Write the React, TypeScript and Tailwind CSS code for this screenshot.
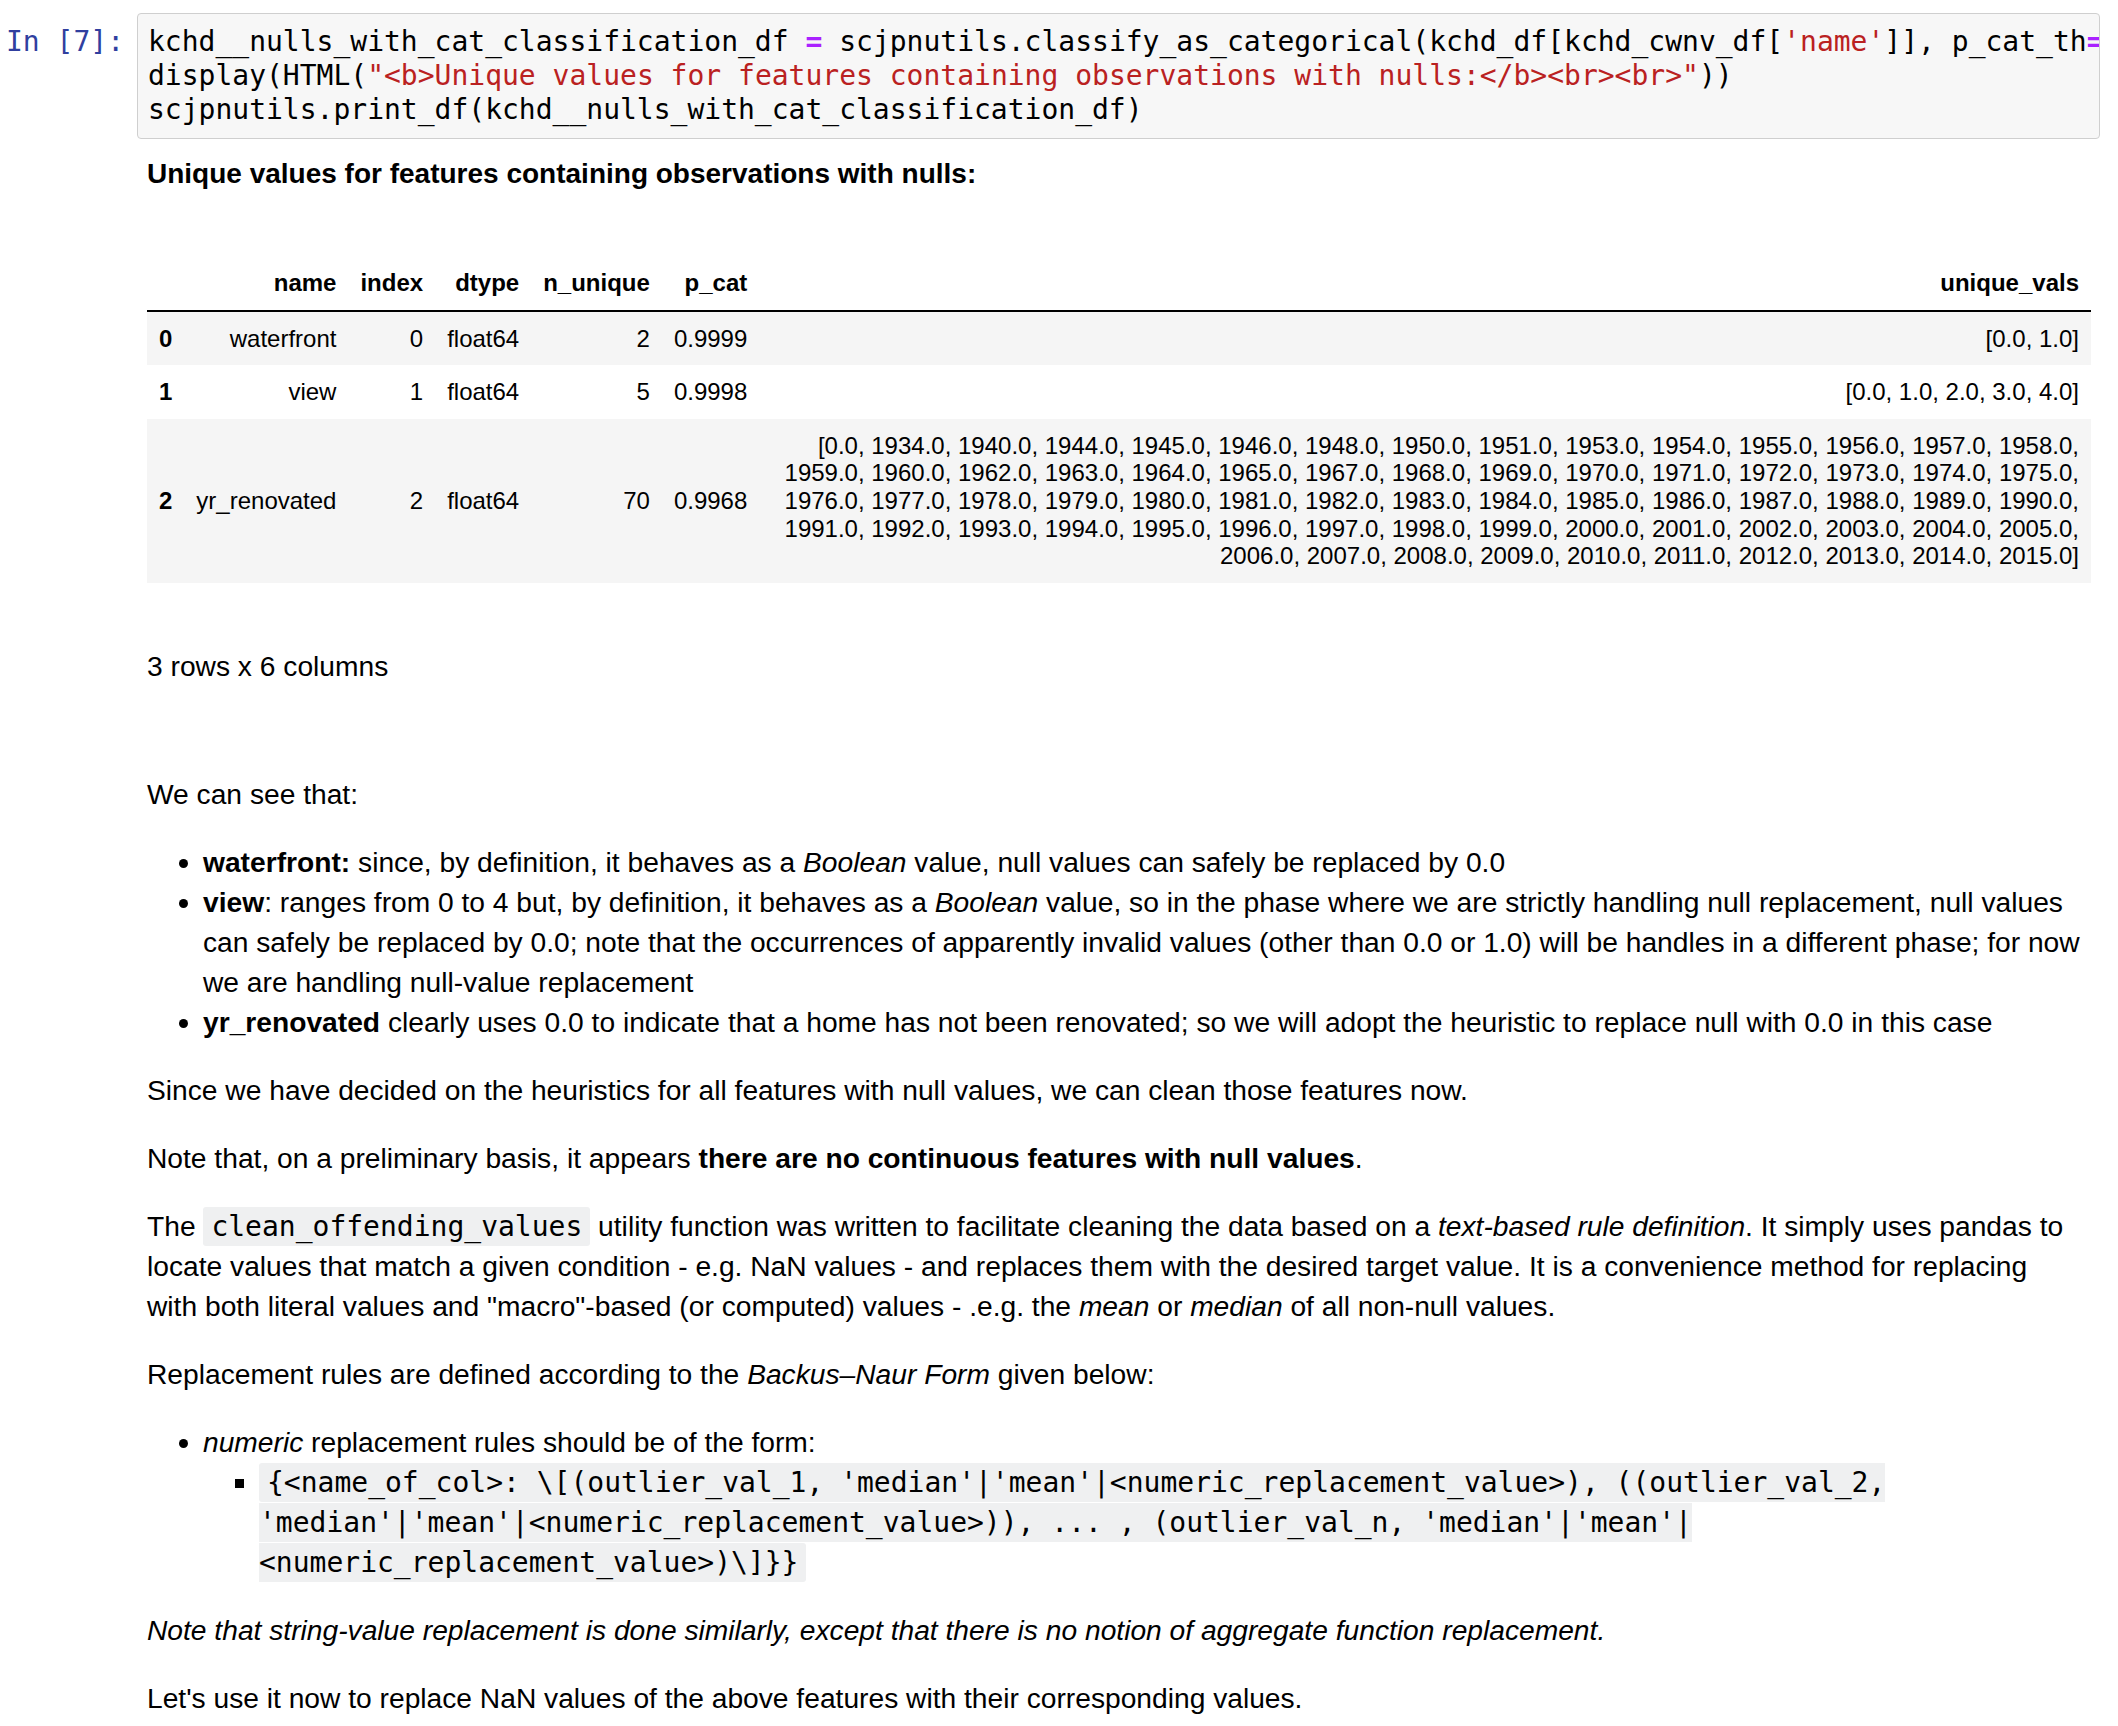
import React from 'react'

type Row = {
  label: number
  name: string
  index: number
  dtype: string
  nUnique: number
  pCat: string
  uniqueVals: string
}

const years =
  '[0.0, 1934.0, 1940.0, 1944.0, 1945.0, 1946.0, 1948.0, 1950.0, 1951.0, 1953.0, 1954.0, 1955.0, 1956.0, 1957.0, 1958.0, ' +
  '1959.0, 1960.0, 1962.0, 1963.0, 1964.0, 1965.0, 1967.0, 1968.0, 1969.0, 1970.0, 1971.0, 1972.0, 1973.0, 1974.0, 1975.0, ' +
  '1976.0, 1977.0, 1978.0, 1979.0, 1980.0, 1981.0, 1982.0, 1983.0, 1984.0, 1985.0, 1986.0, 1987.0, 1988.0, 1989.0, 1990.0, ' +
  '1991.0, 1992.0, 1993.0, 1994.0, 1995.0, 1996.0, 1997.0, 1998.0, 1999.0, 2000.0, 2001.0, 2002.0, 2003.0, 2004.0, 2005.0, ' +
  '2006.0, 2007.0, 2008.0, 2009.0, 2010.0, 2011.0, 2012.0, 2013.0, 2014.0, 2015.0]'

const rows: Row[] = [
  { label: 0, name: 'waterfront', index: 0, dtype: 'float64', nUnique: 2, pCat: '0.9999', uniqueVals: '[0.0, 1.0]' },
  { label: 1, name: 'view', index: 1, dtype: 'float64', nUnique: 5, pCat: '0.9998', uniqueVals: '[0.0, 1.0, 2.0, 3.0, 4.0]' },
  { label: 2, name: 'yr_renovated', index: 2, dtype: 'float64', nUnique: 70, pCat: '0.9968', uniqueVals: years },
]

const headers = ['name', 'index', 'dtype', 'n_unique', 'p_cat', 'unique_vals']

function Op({ children }: { children: React.ReactNode }) {
  return <span className="text-[#aa22ff] font-bold">{children}</span>
}

function Str({ children }: { children: React.ReactNode }) {
  return <span className="text-[#ba2121]">{children}</span>
}

function Code({ children }: { children: React.ReactNode }) {
  return (
    <code className="font-['DejaVu_Sans_Mono',monospace] text-[28px] leading-none bg-[#eff0f1] rounded-[3px] px-[8px] py-[3px]">
      {children}
    </code>
  )
}

function CodeCell() {
  return (
    <div className="flex pt-[13px] pr-[18px]">
      <div className="w-[137px] shrink-0 pr-[13px] pt-[12px] text-right font-['DejaVu_Sans_Mono',monospace] text-[28px] leading-[34px] text-[#303f9f]">
        In&nbsp;[7]:
      </div>
      <div className="flex-1 min-w-0 overflow-hidden rounded-[4px] border border-[#cfcfcf] bg-[#f7f7f7] pl-[10px] pt-[11px] pb-[11px]">
        <pre className="font-['DejaVu_Sans_Mono',monospace] text-[28px] leading-[34px] text-black whitespace-pre">
          <div>
            kchd__nulls_with_cat_classification_df <Op>=</Op> scjpnutils.classify_as_categorical(kchd_df[kchd_cwnv_df[<Str>'name'</Str>]], p_cat_th<Op>=</Op>0.9)
          </div>
          <div>
            display(HTML(<Str>"&lt;b&gt;Unique values for features containing observations with nulls:&lt;/b&gt;&lt;br&gt;&lt;br&gt;"</Str>))
          </div>
          <div>scjpnutils.print_df(kchd__nulls_with_cat_classification_df)</div>
        </pre>
      </div>
    </div>
  )
}

function DataTable() {
  return (
    <table className="w-full border-collapse text-[24px] leading-[1.15] text-black mt-[22px]">
      <thead className="border-b-2 border-black">
        <tr>
          <th className="px-[12px] py-[13px]"></th>
          {headers.map((h) => (
            <th key={h} className="px-[12px] py-[13px] text-right font-bold whitespace-nowrap">
              {h}
            </th>
          ))}
        </tr>
      </thead>
      <tbody>
        {rows.map((r) => (
          <tr key={r.label} className={r.label % 2 === 0 ? 'bg-[#f5f5f5]' : 'bg-white'}>
            <th className="px-[12px] py-[13px] text-right font-bold align-middle">{r.label}</th>
            <td className="px-[12px] py-[13px] text-right align-middle whitespace-nowrap">{r.name}</td>
            <td className="px-[12px] py-[13px] text-right align-middle whitespace-nowrap">{r.index}</td>
            <td className="px-[12px] py-[13px] text-right align-middle whitespace-nowrap">{r.dtype}</td>
            <td className="px-[12px] py-[13px] text-right align-middle whitespace-nowrap">{r.nUnique}</td>
            <td className="px-[12px] py-[13px] text-right align-middle whitespace-nowrap">{r.pCat}</td>
            <td className="px-[12px] py-[13px] text-right align-middle">{r.uniqueVals}</td>
          </tr>
        ))}
      </tbody>
    </table>
  )
}

export default function App() {
  return (
    <div className="min-h-screen w-[2118px] bg-white text-black font-['Liberation_Sans',Arial,Helvetica,sans-serif] pb-[8px]">
      <CodeCell />

      <div className="pl-[147px] pr-[27px]">
        <div className="mt-[15px] text-[28px] leading-[40px] font-bold">
          Unique values for features containing observations with nulls:
        </div>
        <div className="h-[40px]" />
        <DataTable />

        <p className="mt-[63px] text-[28.2px] leading-[40px]">3 rows x 6 columns</p>
      </div>

      <div className="pl-[147px] pr-[35px] mt-[88px] text-[28.2px] leading-[40px] flex flex-col gap-[28px]">
        <p>We can see that:</p>

        <ul className="list-disc pl-[56px]">
          <li>
            <b>waterfront:</b> since, by definition, it behaves as a <i>Boolean</i> value, null values can safely be replaced by 0.0
          </li>
          <li>
            <b>view</b>: ranges from 0 to 4 but, by definition, it behaves as a <i>Boolean</i> value, so in the phase where we are
            strictly handling null replacement, null values can safely be replaced by 0.0; note that the occurrences of apparently
            invalid values (other than 0.0 or 1.0) will be handles in a different phase; for now we are handling null-value
            replacement
          </li>
          <li>
            <b>yr_renovated</b> clearly uses 0.0 to indicate that a home has not been renovated; so we will adopt the heuristic to
            replace null with 0.0 in this case
          </li>
        </ul>

        <p>Since we have decided on the heuristics for all features with null values, we can clean those features now.</p>

        <p>
          Note that, on a preliminary basis, it appears <b>there are no continuous features with null values</b>.
        </p>

        <p>
          The <Code>clean_offending_values</Code> utility function was written to facilitate cleaning the data based on a{' '}
          <i>text-based rule definition</i>. It simply uses pandas to locate values that match a given condition - e.g. NaN values
          - and replaces them with the desired target value. It is a convenience method for replacing with both literal values and
          "macro"-based (or computed) values - .e.g. the <i>mean</i> or <i>median</i> of all non-null values.
        </p>

        <p>
          Replacement rules are defined according to the <i>Backus–Naur Form</i> given below:
        </p>

        <ul className="list-disc pl-[56px]">
          <li>
            <i>numeric</i> replacement rules should be of the form:
            <ul className="list-[square] pl-[56px]">
              <li>
                <Code>
                  {"{<name_of_col>: \\[(outlier_val_1, 'median'|'mean'|<numeric_replacement_value>), ((outlier_val_2, 'median'|'mean'|<numeric_replacement_value>)), ... , (outlier_val_n, 'median'|'mean'|<numeric_replacement_value>)\\]}}"}
                </Code>
              </li>
            </ul>
          </li>
        </ul>

        <p>
          <i>Note that string-value replacement is done similarly, except that there is no notion of aggregate function replacement.</i>
        </p>

        <p>Let's use it now to replace NaN values of the above features with their corresponding values.</p>
      </div>
    </div>
  )
}
